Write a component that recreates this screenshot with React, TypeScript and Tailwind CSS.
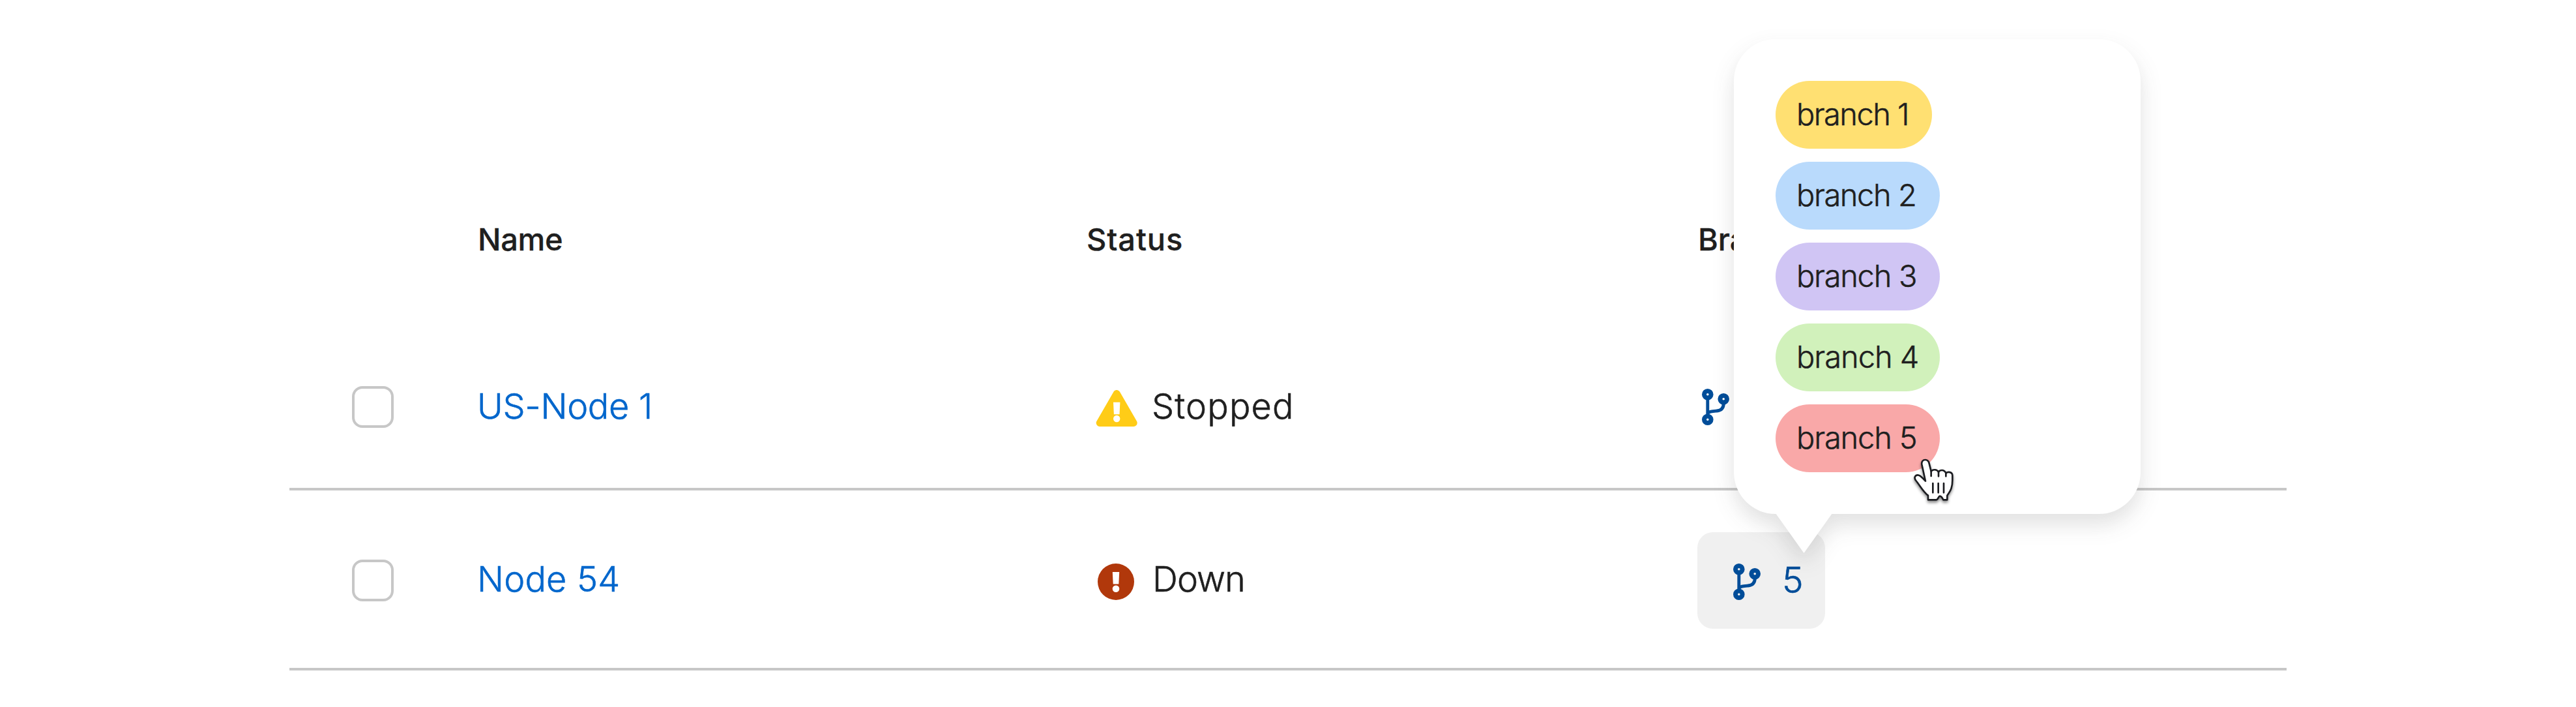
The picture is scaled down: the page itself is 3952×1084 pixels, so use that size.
import type { ReactNode } from "react";

const COLUMNS = "grid grid-cols-[288px_936px_936px_1fr]";

function WarningIcon() {
  return (
    <svg width="66" height="56" viewBox="0 0 66 56" className="shrink-0">
      <path
        d="M33.2 5.5 7.2 50.4h52z"
        fill="#ffcc17"
        stroke="#ffcc17"
        strokeWidth="11"
        strokeLinejoin="round"
      />
      <path d="M28 18.8h10.4l-.9 18.4h-8.6z" fill="#fff" />
      <circle cx="33.2" cy="44" r="5.2" fill="#fff" />
    </svg>
  );
}

function DangerIcon() {
  return (
    <svg width="56" height="56" viewBox="0 0 56 56" className="mx-[5px] -translate-x-px shrink-0">
      <circle cx="28" cy="28" r="28" fill="#b1380b" />
      <path d="M22.8 13h10.4l-.9 18.6h-8.6z" fill="#fff" />
      <circle cx="28" cy="38.7" r="5.3" fill="#fff" />
    </svg>
  );
}

function BranchIcon() {
  return (
    <svg width="42" height="56" viewBox="0 0 42 56" fill="none" stroke="#004d99" className="shrink-0">
      <path d="M8.8 14v28" strokeWidth="4.9" />
      <path d="M33.4 22c0 8-3.6 11.4-10.5 12-6.5.6-12.6.9-14.1 4.3" strokeWidth="4.9" />
      <g strokeWidth="7">
        <circle cx="8.8" cy="8.8" r="5.3" />
        <circle cx="33.2" cy="15.8" r="5.3" />
        <circle cx="8.8" cy="47.2" r="5.3" />
      </g>
    </svg>
  );
}

function HandCursor() {
  return (
    <svg
      width="84"
      height="90"
      viewBox="0 0 252 270"
      className="absolute left-[2926px] top-[692px] drop-shadow-[0_3px_2px_rgba(0,0,0,0.45)]"
      stroke="#1b1c20"
      strokeWidth="8"
      strokeLinecap="round"
      strokeLinejoin="round"
    >
      <path
        d="M84 137 67 60C65 46 73 39 83 39c11 0 16 8 18 17l9 36c7-10 27-10 34 3 8-12 28-11 34 6 9-9 30-7 30 10v22c0 30-6 45-24 70v20h-18c-5-10-10-17-16-17s-8 17-16 17H96v-20C74 188 58 156 38 132c-8-13 0-23 10-23 14 0 20 12 36 28Z"
        fill="#fff"
      />
      <path d="M110 92v22M144 95v20M178 101v14M118 147v43M143 147v43M168 147v43" fill="none" />
    </svg>
  );
}

function Checkbox({ className = "" }: { className?: string }) {
  return (
    <span
      role="checkbox"
      aria-checked="false"
      className={`ml-24 block size-16 rounded-2xl border-4 border-[#c7c7c7] bg-white ${className}`}
    />
  );
}

function Row({ className, children }: { className: string; children: ReactNode }) {
  return (
    <div
      className={`${COLUMNS} items-center border-b-4 border-[#c7c7c7] text-[54px] leading-[64px] font-light [-webkit-text-stroke:0.6px_currentColor] ${className}`}
    >
      {children}
    </div>
  );
}

const branches = [
  { label: "branch 1", style: "w-[240px] bg-[#ffe072] tracking-[-1.55px]" },
  { label: "branch 2", style: "w-[252px] bg-[#b9dafc] tracking-[-1.4px]" },
  { label: "branch 3", style: "w-[252px] bg-[#d0c5f4] tracking-[-1.26px]" },
  { label: "branch 4", style: "w-[252px] bg-[#d1f1bb] tracking-[-1px]" },
  { label: "branch 5", style: "w-[252px] bg-[#f9a8a8] tracking-[-1.15px]" },
];

function BranchPopover() {
  return (
    <div className="absolute left-[2660px] top-[60px] h-[728px] w-[624px] drop-shadow-[0_16px_16px_rgba(41,41,41,0.14)]">
      <div className="flex h-full flex-col items-start gap-5 rounded-[64px] bg-white p-16">
        {branches.map((b) => (
          <span
            key={b.label}
            className={`flex h-[104px] items-center rounded-full pb-0.5 pl-8 text-[47px] font-light whitespace-nowrap [-webkit-text-stroke:0.5px_currentColor] ${b.style}`}
          >
            {b.label}
          </span>
        ))}
      </div>
      <div className="absolute left-16 top-[727px] h-[61px] w-[87px] bg-white [clip-path:polygon(0_0,100%_0,50%_100%)]" />
    </div>
  );
}

export default function App() {
  return (
    <div className="relative h-[1084px] w-[3952px] overflow-hidden bg-white font-['Inter',sans-serif] text-[#1f1f1f]">
      <div className="ml-[444px] w-[3064px]">
        <div className={`${COLUMNS} h-[500px] pt-[343px] text-[47px] leading-[48px] font-medium [-webkit-text-stroke:0.3px_currentColor]`}>
          <span />
          <span className="pl-px tracking-[-0.33px]">Name</span>
          <span className="-ml-px tracking-[0.89px]">Status</span>
          <span className="pl-px">Branches</span>
        </div>

        <Row className="h-[252px]">
          <Checkbox />
          <a className="pb-[3px] tracking-[-0.29px] text-[#0066cc]">US-Node 1</a>
          <div className="flex items-center pl-3">
            <span className="mt-1">
              <WarningIcon />
            </span>
            <span className="pb-[3px] pl-[21px] tracking-[1.15px]">Stopped</span>
          </div>
          <div className="flex items-center pl-[7px]">
            <BranchIcon />
            <span className="pb-[3px] pl-[33px] text-[#004d99]">5</span>
          </div>
        </Row>

        <Row className="h-[276px]">
          <Checkbox className="mt-1" />
          <a className="tracking-[0.2px] text-[#0066cc]">Node 54</a>
          <div className="flex items-center pl-3">
            <span className="mt-2">
              <DangerIcon />
            </span>
            <span className="pl-[22px] tracking-[-0.96px]">Down</span>
          </div>
          <button className="mt-1 flex h-[148px] w-[196px] items-center rounded-3xl bg-[#f0f0f0] pl-[55px] text-[#004d99]">
            <span className="mt-1">
              <BranchIcon />
            </span>
            <span className="pb-[3px] pl-[33px] text-[55px]">5</span>
          </button>
        </Row>
      </div>

      <BranchPopover />
      <HandCursor />
    </div>
  );
}
